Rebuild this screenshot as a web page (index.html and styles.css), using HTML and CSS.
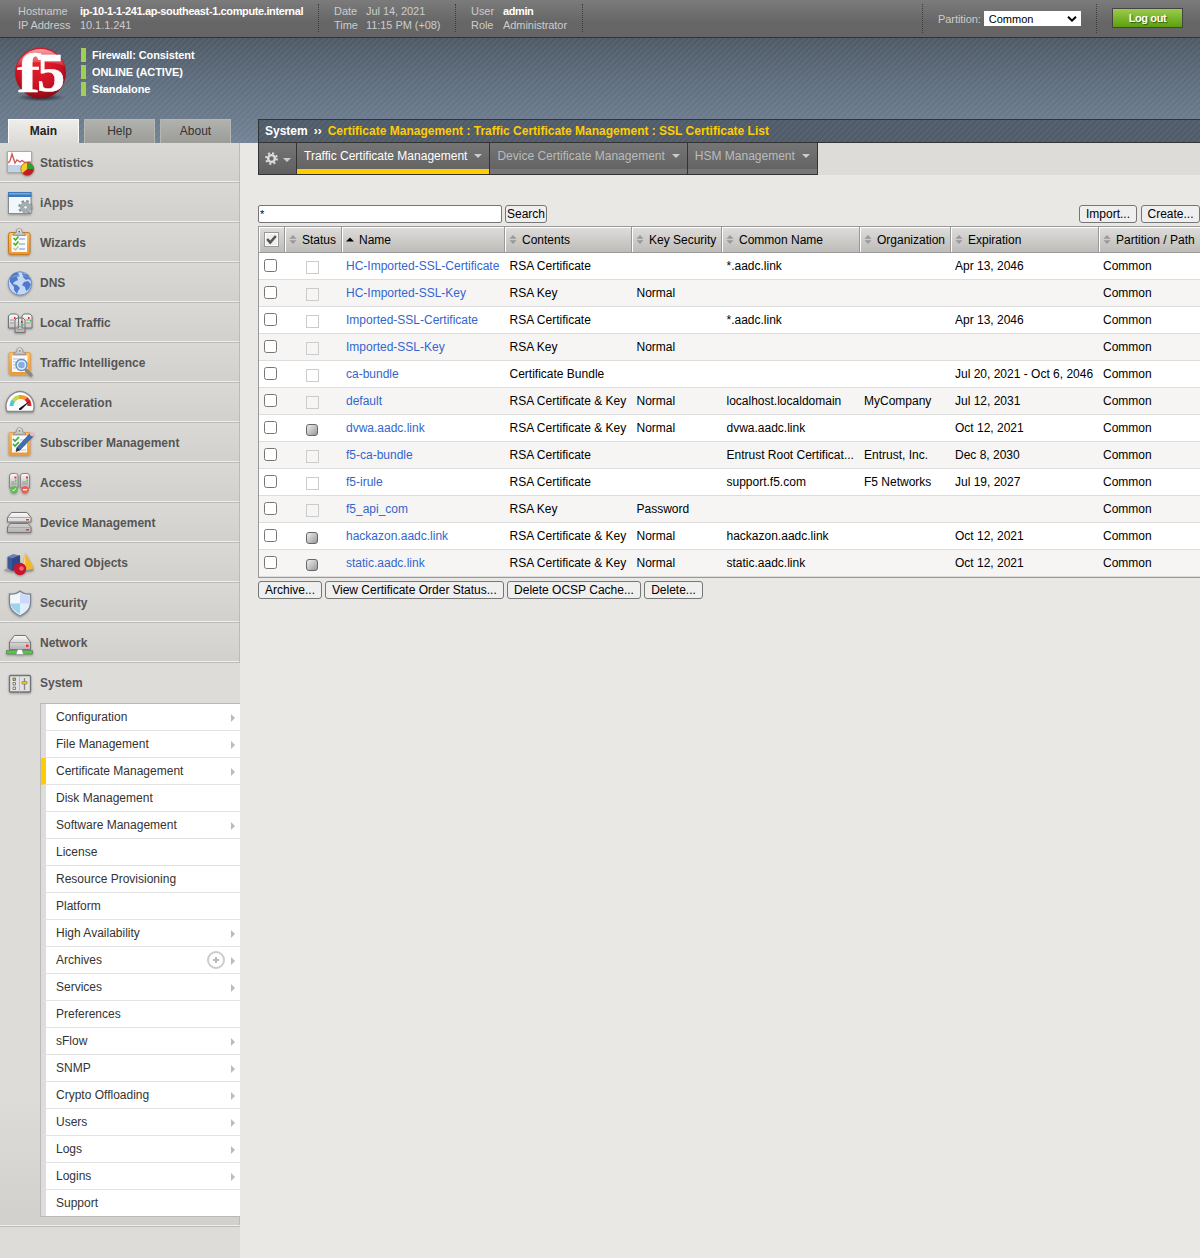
FILE: index.html
```html
<!DOCTYPE html>
<html lang="en">
<head>
<meta charset="utf-8">
<title>SSL Certificate List</title>
<link rel="stylesheet" href="styles.css">
</head>
<body>
<svg class="defs" width="0" height="0" aria-hidden="true">
  <defs>
    <linearGradient id="metal" x1="0" y1="0" x2="0" y2="1"><stop offset="0" stop-color="#fafafa"/><stop offset="1" stop-color="#b2b2b2"/></linearGradient>
    <linearGradient id="board" x1="0" y1="0" x2="0" y2="1"><stop offset="0" stop-color="#ffc063"/><stop offset="1" stop-color="#f2952a"/></linearGradient>
    <radialGradient id="ball" cx=".45" cy=".3" r=".7"><stop offset="0" stop-color="#e8222c"/><stop offset=".65" stop-color="#cc1222"/><stop offset="1" stop-color="#8c0a16"/></radialGradient>
    <linearGradient id="gloss" x1="0" y1="0" x2="0" y2="1"><stop offset="0" stop-color="#fff" stop-opacity=".6"/><stop offset="1" stop-color="#fff" stop-opacity=".1"/></linearGradient>
    <radialGradient id="shade"><stop offset="0" stop-color="#1b222b"/><stop offset="1" stop-color="#1b222b" stop-opacity="0"/></radialGradient>
    <symbol id="sort" viewBox="0 0 7 9"><path d="M3.5 0 7 3.8H0zM3.5 9 0 5.2h7z" fill="#999"/></symbol>
    <symbol id="clip" viewBox="0 0 40 40"><path d="M14 12.500v-1.500l3-1.500q0-4 3-4t3 4l3 1.500v1.500z" fill="url(#metal)" stroke="#8b8b8b" stroke-width=".8"/><circle cx="20" cy="8.500" r=".9" fill="#777"/></symbol>
  </defs>
</svg>

<header class="topbar">
  <dl class="info host"><dt>Hostname</dt><dd class="strong">ip-10-1-1-241.ap-southeast-1.compute.internal</dd><dt>IP Address</dt><dd>10.1.1.241</dd></dl>
  <dl class="info date"><dt>Date</dt><dd>Jul 14, 2021</dd><dt>Time</dt><dd>11:15 PM (+08)</dd></dl>
  <dl class="info user"><dt>User</dt><dd class="strong">admin</dd><dt>Role</dt><dd>Administrator</dd></dl>
  <div class="partition"><span>Partition:</span><div class="select">Common<svg width="10" height="6" viewBox="0 0 10 6"><path d="M1 .8 5 4.700 9 .8" fill="none" stroke="#000" stroke-width="1.900"/></svg></div></div>
  <button class="logout">Log out</button>
</header>

<div class="banner">
  <svg class="logo" width="60" height="60" viewBox="0 0 60 60">
    <ellipse cx="30" cy="50.500" rx="24" ry="4" fill="url(#shade)"/>
    <circle cx="29.500" cy="26" r="25.500" fill="url(#ball)"/>
    <path d="M5.500 19a25.500 25.500 0 0 1 48 0Q32 11 5.500 19z" fill="url(#gloss)"/>
    <g fill="#fff" stroke="#fff" stroke-width=".6" font-family="Liberation Serif, serif" font-weight="700">
      <text x="6" y="44.500" font-size="54" textLength="23" lengthAdjust="spacingAndGlyphs">f</text>
      <text x="26" y="44" font-size="54" textLength="28" lengthAdjust="spacingAndGlyphs">5</text>
    </g>
  </svg>
  <ul class="state"><li>Firewall: Consistent</li><li>ONLINE (ACTIVE)</li><li>Standalone</li></ul>
</div>

<div class="page">
  <aside class="sidebar">
    <nav class="side-tabs"><a class="on">Main</a><a>Help</a><a>About</a></nav>
    <ul class="menu">
      <li><svg viewBox="0 0 40 40"><path d="M7.500 8.500h24v20.500h-24z" fill="#fdfdfd" stroke="#aaa"/><path d="M8 22h23v6H8z" fill="#bfd4e8"/><path d="M8 20l2-2 2-7 3 9 2-3 3 2 2-1.500 3 2 6-.5" fill="none" stroke="#d0525a" stroke-width="1.300"/><circle cx="27.300" cy="26" r="6.500" fill="#c9182b"/><path d="M27.300 26V19.500a6.500 6.500 0 0 0-5 10.700z" fill="#f4cf2c"/><path d="M27.300 26V19.500a6.500 6.500 0 0 1 6.500 6.500z" fill="#2ba52b"/><circle cx="27.300" cy="26" r="6.500" fill="none" stroke="#a0522d" stroke-width=".6"/></svg>Statistics</li>
      <li><svg viewBox="0 0 40 40"><path d="M8.500 9.500h22.500v21H8.500z" fill="#f3f6fb" stroke="#858b92"/><path d="M8 9h23.500v5H8z" fill="#3f78b8"/><path d="M9 10h21.500v1.500H9z" fill="#76a9df"/><circle cx="25.500" cy="24.300" r="6" fill="none" stroke="#8a9495" stroke-width="2.600" stroke-dasharray="2.600 2.112"/><circle cx="25.500" cy="24.300" r="4" fill="#d4dada" stroke="#a3adad" stroke-width="3"/><circle cx="25.500" cy="24.300" r="2" fill="#e9eded" stroke="#7d8788" stroke-width=".8"/></svg>iApps</li>
      <li><svg viewBox="0 0 40 40"><rect x="8.500" y="9.500" width="21.500" height="22" rx="2" fill="url(#board)" stroke="#c07b27"/><path d="M11.500 12.500h15.500v16.500H11.500z" fill="#f8fafc"/><path d="M19 16h6m-6 5h6m-6 5h6" stroke="#a7b2d8" stroke-width="1.500"/><path d="m13.500 15 2 2 3-3.500m-5 6.500 2 2 3-3.500" fill="none" stroke="#43b71e" stroke-width="1.700"/><path d="m13.500 25 2 2 3-3.500" fill="none" stroke="#b9c5b8" stroke-width="1.500"/><use href="#clip" x="-.8"/></svg>Wizards</li>
      <li><svg viewBox="0 0 40 40"><circle cx="20" cy="20.500" r="11.700" fill="#c4d8f3" stroke="#6e8cc0"/><path d="M10 15q3-6 8-5l2 3-3 1 1 3-4 2-1 2 4 1 3 3-2 3-1 3-3-4v-3l-4-5zM22 10l6 2 3 6-3-2-2 1-3-3zM24 19l4-1 3 3-2 5-3 2-1-4-3-2z" fill="#5079cb"/><path d="M11 15a11 8 0 0 1 18 0q-8-4-18 0z" fill="#fff" opacity=".25"/></svg>DNS</li>
      <li><svg viewBox="0 0 40 40"><g stroke="#747474" fill="url(#metal)"><path d="M8.500 25V13l2-2h6l2 2v12zM22 25V13l2-2h6l2 2v12zM15 29.500V17l2-2h6l2 2v12.500z"/></g><path d="M10 17h4.500m-4.500 3h4.500m11-3h5m-5 3h5m-13.500 3.500h6m-6 3h6" stroke="#999"/><path d="M14 14h1.500v2H14zM28 14h1.500v2H28zM21 18h1.500v2H21z" fill="#ec202d"/><path d="M30 17h1.500v1.500H30zM22 21h1.500v1.500H22z" fill="#2fc743"/></svg>Local Traffic</li>
      <li><svg viewBox="0 0 40 40"><rect x="9" y="9.500" width="21.500" height="22" rx="1.500" fill="url(#board)" stroke="#e0a355"/><path d="M12 12.500h15.500v16.500H12z" fill="#f8fafc"/><path d="M13 16h12m-12 3h4m-4 3h3m-3 3h3" stroke="#b4bdd5"/><use href="#clip" x="-.3" y="-.8"/><path d="m26 27 5 5" stroke="#888" stroke-width="3.200" stroke-linecap="round"/><circle cx="21.500" cy="22" r="5.500" fill="#e3eefa" stroke="#6590c4" stroke-width="1.400"/><circle cx="21.500" cy="22" r="3.300" fill="#86aedc"/></svg>Traffic Intelligence</li>
      <li><svg viewBox="0 0 40 40"><path d="M7 28.500Q4 20 10 13q10-9 20 0 6 7 3 15.500z" fill="#fdfdfd" stroke="#888" stroke-width="1.300"/><g fill="none" stroke-width="4"><path d="M11.500 23q0-3 2-5.500" stroke="#54c5cf"/><path d="M13.500 17.500Q16 14.500 19 14" stroke="#c4d84b"/><path d="M19 14q4-.5 7 1.500" stroke="#f39b28"/><path d="M26 15.500q3.500 3 3.500 7.500" stroke="#e12a24"/></g><path d="M19 25.500 31 17l-9.500 9.500q-3 1.500-2.500-1z" fill="#111"/></svg>Acceleration</li>
      <li><svg viewBox="0 0 40 40"><rect x="9" y="9.500" width="21" height="22.500" rx="1" fill="url(#board)" stroke="#e0a355"/><path d="M12 12.500h15v17H12z" fill="#f8fafc"/><path d="M20 17h6m-6 5h6m-8 5h8" stroke="#b6bfdd"/><path d="m13 16 2 2 4-4m-6 7 2 2 4-4" fill="none" stroke="#39ad35" stroke-width="1.700"/><use href="#clip" x="-.5" y="-.8"/><path d="m16 28.500 1-4L29.500 11l3 2.700L20 27z" fill="#3f70b5" stroke="#2b4f88" stroke-width=".7"/><path d="m16 28.500 1-4 3 2.500z" fill="#333"/><circle cx="32" cy="11.200" r="2" fill="#f4b3c6"/></svg>Subscriber Management</li>
      <li><svg viewBox="0 0 40 40"><g stroke="#888" fill="url(#metal)"><path d="M9.500 25V13q0-2.500 2.500-2.500h3.500Q18 10.500 18 13v12zM20.500 25V13q0-2.500 2.500-2.500h4q2.500 0 2.500 2.500v12z"/></g><path d="M11 19h5.500M11 21h5.500M22 19h6m-6 2h6" stroke="#999"/><path d="M14.500 13.500h2v2h-2zM26 13.500h2v2h-2z" fill="#f02b35"/><path d="M15 16.500h1.500V18H15zM26.500 16.500H28V18h-1.500z" fill="#3fd04b"/><circle cx="14" cy="26.700" r="3.700" fill="#64b957"/><path d="m12.300 26.700 1.300 1.300 2-2.600" stroke="#fff" fill="none"/><circle cx="25" cy="26.700" r="3.700" fill="#e56158"/><path d="M23 26.700h4" stroke="#fff" stroke-width="1.300"/></svg>Access</li>
      <li><svg viewBox="0 0 40 40"><g fill="url(#metal)" stroke="#777"><path d="M7.500 19v-4.500l4-5h15.500l4 5V19zM7.500 29.500V24l3-3.500h17.500l3 3.500v5.500z"/></g><path d="M8 14.500h22.500M8 24.500h22.500" stroke="#aaa"/><path d="M26 16h3v1.500h-3zM26 26h3v1.500h-3z" fill="#ec3544"/></svg>Device Management</li>
      <li><svg viewBox="0 0 40 40"><ellipse cx="19" cy="27" rx="15" ry="3" fill="#777" opacity=".4"/><path d="m7.500 14 5.500-2.500 7 1v12L12 28l-4.500-3z" fill="#3c5797"/><path d="m7.500 14 5.500-2.500 7 1-7.500 3z" fill="#6681b8"/><path d="m12 15.500 8-3v12L12 28z" fill="#2f4885"/><path d="M25.500 10 34 25q-5 3-12 1.500z" fill="#f0b62e"/><path d="m25.500 10-3.500 16 3-.3z" fill="#ffda73"/><circle cx="20" cy="26" r="6.200" fill="#c9142d"/><circle cx="21.500" cy="25.500" r="2.300" fill="#e96a7a"/></svg>Shared Objects</li>
      <li><svg viewBox="0 0 40 40"><path d="M20 8q4 3.500 10.500 3v9q0 8-10.500 13Q9.500 28 9.500 20v-9Q16 11.500 20 8z" fill="#dff0fb" stroke="#7e8490" stroke-width="1.300"/><path d="M20 10v10.500h-9.500V12.500q6 0 9.500-2.500z" fill="#f4f7fa"/><path d="M20 10v10.500h9.500V12.500q-6 0-9.500-2.500z" fill="#cdd9f8"/><path d="M20 20.500V31q-9-4.500-9.500-10.500z" fill="#9dd2f0"/></svg>Security</li>
      <li><svg viewBox="0 0 40 40"><path d="M9.500 26.500V19l5-6.500h11l5 6.500v7.500z" fill="url(#metal)" stroke="#777"/><path d="M10 19.500h20" stroke="#aaa"/><path d="M26 21.500h2.500V24H26z" fill="#ec3544"/><path d="M6.500 27.500h26v3.500h-26z" fill="#4fcb3d" stroke="#6c8e66"/><path d="m16 31.500 1.500-5h4.500l1.500 5z" fill="#fff" stroke="#888" stroke-width=".6"/></svg>Network</li>
      <li class="open"><svg viewBox="0 0 40 40"><rect x="9.500" y="12.500" width="21" height="16.500" rx="1" fill="#e2e2e2" stroke="#737373" stroke-width="1.300"/><path d="M19.500 13v16" stroke="#bbb"/><g fill="#eee" stroke="#666" stroke-width=".8"><path d="M13 15h2.500v2.500H13z" fill="#d6c02c"/><path d="M13 19.500h2.500V22H13zM13 24h2.500v2.500H13z"/></g><path d="M24.500 15v12" stroke="#888" stroke-width="1.300"/><path d="M22 18.500h5v2.500h-5z" fill="#e9cf2e" stroke="#777" stroke-width=".6"/></svg>System</li>
    </ul>
    <div class="submenu-wrap">
      <ul class="submenu">
        <li class="more">Configuration</li><li class="more">File Management</li><li class="more current">Certificate Management</li><li>Disk Management</li><li class="more">Software Management</li><li>License</li><li>Resource Provisioning</li><li>Platform</li><li class="more">High Availability</li>
        <li class="more">Archives<svg class="add" width="18" height="18" viewBox="0 0 18 18"><circle cx="9" cy="9" r="8" fill="none" stroke="#ccc" stroke-width="2"/><path d="M9 6v6M6 9h6" stroke="#bbb" stroke-width="2"/></svg></li>
        <li class="more">Services</li><li>Preferences</li><li class="more">sFlow</li><li class="more">SNMP</li><li class="more">Crypto Offloading</li><li class="more">Users</li><li class="more">Logs</li><li class="more">Logins</li><li>Support</li>
      </ul>
    </div>
  </aside>

  <main class="content">
    <div class="crumbs"><b>System</b><b class="sep">››</b><span>Certificate Management : Traffic Certificate Management : SSL Certificate List</span></div>
    <nav class="tabs">
      <a class="gear"><svg width="13" height="13" viewBox="0 0 13 13"><circle cx="6.500" cy="6.500" r="5.400" fill="none" stroke="#ddd" stroke-width="2" stroke-dasharray="2 2.240"/><circle cx="6.500" cy="6.500" r="3.400" fill="none" stroke="#ddd" stroke-width="2.400"/></svg><i></i></a>
      <a class="on">Traffic Certificate Management<i></i></a>
      <a>Device Certificate Management<i></i></a>
      <a>HSM Management<i></i></a>
    </nav>
    <div class="toolbar">
      <input class="query" type="text" value="*"><button class="search">Search</button>
      <button class="import">Import...</button><button class="create">Create...</button>
    </div>
    <table class="list">
      <colgroup><col class="c1"><col class="c2"><col class="c3"><col class="c4"><col class="c5"><col class="c6"><col class="c7"><col class="c8"><col></colgroup>
      <thead><tr>
        <th><span class="all"><svg width="11" height="11" viewBox="0 0 11 11"><path d="m1.200 5 3 3.500L9.800 2" fill="none" stroke="#555" stroke-width="2.600"/></svg></span></th>
        <th><svg class="s"><use href="#sort"/></svg>Status</th>
        <th><svg class="s"><path d="M0 6.500h8L4 2.500z"/></svg>Name</th>
        <th><svg class="s"><use href="#sort"/></svg>Contents</th>
        <th><svg class="s"><use href="#sort"/></svg>Key Security</th>
        <th><svg class="s"><use href="#sort"/></svg>Common Name</th>
        <th><svg class="s"><use href="#sort"/></svg>Organization</th>
        <th><svg class="s"><use href="#sort"/></svg>Expiration</th>
        <th><svg class="s"><use href="#sort"/></svg>Partition / Path</th>
      </tr></thead>
      <tbody>
        <tr><td><input type="checkbox"></td><td><i class="none"></i></td><td><a>HC-Imported-SSL-Certificate</a></td><td>RSA Certificate</td><td></td><td>*.aadc.link</td><td></td><td>Apr 13, 2046</td><td>Common</td></tr>
        <tr><td><input type="checkbox"></td><td><i class="none"></i></td><td><a>HC-Imported-SSL-Key</a></td><td>RSA Key</td><td>Normal</td><td></td><td></td><td></td><td>Common</td></tr>
        <tr><td><input type="checkbox"></td><td><i class="none"></i></td><td><a>Imported-SSL-Certificate</a></td><td>RSA Certificate</td><td></td><td>*.aadc.link</td><td></td><td>Apr 13, 2046</td><td>Common</td></tr>
        <tr><td><input type="checkbox"></td><td><i class="none"></i></td><td><a>Imported-SSL-Key</a></td><td>RSA Key</td><td>Normal</td><td></td><td></td><td></td><td>Common</td></tr>
        <tr><td><input type="checkbox"></td><td><i class="none"></i></td><td><a>ca-bundle</a></td><td>Certificate Bundle</td><td></td><td></td><td></td><td>Jul 20, 2021 - Oct 6, 2046</td><td>Common</td></tr>
        <tr><td><input type="checkbox"></td><td><i class="none"></i></td><td><a>default</a></td><td>RSA Certificate &amp; Key</td><td>Normal</td><td>localhost.localdomain</td><td>MyCompany</td><td>Jul 12, 2031</td><td>Common</td></tr>
        <tr><td><input type="checkbox"></td><td><i class="used"></i></td><td><a>dvwa.aadc.link</a></td><td>RSA Certificate &amp; Key</td><td>Normal</td><td>dvwa.aadc.link</td><td></td><td>Oct 12, 2021</td><td>Common</td></tr>
        <tr><td><input type="checkbox"></td><td><i class="none"></i></td><td><a>f5-ca-bundle</a></td><td>RSA Certificate</td><td></td><td>Entrust Root Certificat...</td><td>Entrust, Inc.</td><td>Dec 8, 2030</td><td>Common</td></tr>
        <tr><td><input type="checkbox"></td><td><i class="none"></i></td><td><a>f5-irule</a></td><td>RSA Certificate</td><td></td><td>support.f5.com</td><td>F5 Networks</td><td>Jul 19, 2027</td><td>Common</td></tr>
        <tr><td><input type="checkbox"></td><td><i class="none"></i></td><td><a>f5_api_com</a></td><td>RSA Key</td><td>Password</td><td></td><td></td><td></td><td>Common</td></tr>
        <tr><td><input type="checkbox"></td><td><i class="used"></i></td><td><a>hackazon.aadc.link</a></td><td>RSA Certificate &amp; Key</td><td>Normal</td><td>hackazon.aadc.link</td><td></td><td>Oct 12, 2021</td><td>Common</td></tr>
        <tr><td><input type="checkbox"></td><td><i class="used"></i></td><td><a>static.aadc.link</a></td><td>RSA Certificate &amp; Key</td><td>Normal</td><td>static.aadc.link</td><td></td><td>Oct 12, 2021</td><td>Common</td></tr>
      </tbody>
    </table>
    <div class="actions"><button class="w1">Archive...</button><button class="w2">View Certificate Order Status...</button><button class="w3">Delete OCSP Cache...</button><button class="w4">Delete...</button></div>
  </main>
</div>
</body>
</html>
```

FILE: styles.css
```css
* { box-sizing: border-box; }
html, body { margin: 0; }
body {
  height: 1258px;
  overflow: hidden;
  display: flex;
  flex-direction: column;
  background: #e9e8e4;
  font: 12px/16px "Liberation Sans", Arial, sans-serif;
  color: #000;
}
ul, dl, dd { margin: 0; padding: 0; list-style: none; }
.defs { position: absolute; }
button {
  height: 18px;
  padding: 0;
  border: 1px solid #767676;
  border-radius: 3px;
  background: #efefef;
  font: 12px/14px "Liberation Sans", Arial, sans-serif;
  color: #000;
  white-space: nowrap;
}

/* top bar */
.topbar {
  flex: none;
  height: 38px;
  display: flex;
  padding-left: 18px;
  border-bottom: 1px solid #333;
  background: linear-gradient(#7b7b7b, #666 60%, #656565);
  color: #ccc;
  font-size: 11px;
  line-height: 14px;
}
.info {
  display: grid;
  align-content: start;
  height: 28px;
  margin-top: 4px;
  border-right: 1px dotted #3c3c3c;
  letter-spacing: -.06px;
  white-space: nowrap;
}
.host { grid-template-columns: 62px 1fr; width: 301px; margin-right: 15px; }
.date { grid-template-columns: 32px 1fr; width: 122px; margin-right: 15px; }
.user { grid-template-columns: 32px 1fr; width: 112px; }
.info .strong { color: #fff; font-weight: 700; letter-spacing: -.38px; }
.user .strong { letter-spacing: -.4px; }
.partition {
  display: flex;
  align-items: center;
  gap: 3px;
  width: 175px;
  height: 29px;
  margin: 4px 0 0 auto;
  padding-left: 15px;
  border: dotted #3c3c3c;
  border-width: 0 1px;
}
.partition span { letter-spacing: -.06px; }
.select {
  display: flex;
  align-items: center;
  justify-content: space-between;
  width: 97px;
  height: 15px;
  padding: 0 4px 0 5px;
  background: #fff;
  color: #000;
}
.topbar .logout {
  width: 71px;
  height: 20px;
  margin: 8px 17px 0 15px;
  border: 1px solid #444;
  border-radius: 0;
  background: linear-gradient(#9bcb4b, #5d9f10);
  color: #fff;
  font-size: 11px;
  font-weight: 700;
  letter-spacing: -.4px;
  text-shadow: 1px 1px 1px #345c08;
}

/* striped banner */
.banner {
  flex: none;
  height: 105px;
  display: flex;
  align-items: flex-start;
  padding: 9px 0 0 11px;
  background:
    repeating-linear-gradient(135deg, rgba(255,255,255,.05) 0 1.400px, transparent 1.400px 4.240px),
    linear-gradient(#4f5a66, #5f6e7e 40%, #738496);
}
.logo { overflow: visible; }
.state { margin: 1px 0 0 10px; font-size: 11px; font-weight: 700; letter-spacing: -.1px; color: #fff; }
.state li { height: 14px; margin-bottom: 3px; padding-left: 6px; border-left: 5px solid #9fcf55; line-height: 14px; }

.page { flex: 1; display: flex; margin-top: -24px; }

/* sidebar */
.sidebar { flex: none; width: 240px; display: flex; flex-direction: column; }
.side-tabs { display: flex; gap: 5px; height: 24px; padding-left: 8px; }
.side-tabs a {
  width: 71px;
  border: 1px solid #b6b6b2;
  border-bottom: 0;
  background: linear-gradient(#b1b1ad, #9c9c98);
  color: #333;
  line-height: 23px;
  text-align: center;
}
.side-tabs .on { border-color: #fafafa; background: linear-gradient(#eeedeb, #dbdad6); color: #222; font-weight: 700; }
.menu { background: #dddcd8; }
.menu li {
  display: flex;
  height: 40px;
  border-right: 1px solid #bbb;
  border-bottom: 1px solid #bbb;
  box-shadow: inset 0 -1px #f0efed;
  background: linear-gradient(#dad9d5, #d1d0cc);
  color: #555;
  font-weight: 700;
  line-height: 41px;
}
.menu svg { width: 40px; height: 40px; flex: none; filter: drop-shadow(0 1px 1px rgba(0,0,0,.3)); }
.menu .open { border-color: transparent; box-shadow: none; background: #dddcd8; }
.submenu-wrap {
  height: 524px;
  padding-left: 40px;
  border-bottom: 1px solid #bbb;
  box-shadow: inset 0 -1px #f0efed, inset -1px 0 #bbb;
  background: linear-gradient(#dddcd8 75%, #d1d0cc);
}
.submenu { border: 1px solid #b9b9b9; border-right: 0; background: #fff; }
.submenu li {
  display: flex;
  align-items: center;
  height: 27px;
  padding: 0 5px 0 10px;
  border-left: 5px solid #ddd;
  border-bottom: 1px solid #e3e3e3;
  color: #333;
}
.submenu li:last-child { height: 26px; border-bottom: 0; }
.submenu .current { border-left-color: #fc0; }
.more::after {
  content: "";
  margin: 1px 0 0 auto;
  border: solid transparent;
  border-width: 4px 0 4px 4px;
  border-left-color: #bbb;
}
.add { margin: 0 0 0 auto; }
.more:has(.add)::after { margin-left: 6px; }
.sidebar::after { content: ""; flex: 1; background: #dddcd8; }

/* content */
.content { flex: 1; min-width: 0; padding-left: 18px; }
.crumbs {
  display: flex;
  height: 24px;
  padding-left: 6px;
  border: 1px solid #333;
  border-right: 0;
  background: repeating-linear-gradient(135deg, rgba(255,255,255,.05) 0 1.400px, transparent 1.400px 4.240px), #505c69;
  font-weight: 700;
  line-height: 22px;
  color: #fff;
}
.crumbs .sep { margin: 0 6px; }
.crumbs span { color: #fc0; }
.tabs { display: flex; height: 32px; background: #dddcd8; }
.tabs a {
  display: flex;
  height: 32px;
  padding: 0 7px;
  border: solid #333;
  border-width: 0 1px 1px 0;
  background: linear-gradient(#757575, #646464 26px, #777 26px);
  color: #bbb;
  line-height: 26px;
}
.tabs .on { background: linear-gradient(#757575, #646464 26px, #fc0 26px); color: #fff; }
.tabs i { margin: 11px 0 0 7px; width: 0; height: 0; border: solid transparent; border-width: 4px 4px 0; border-top-color: #ccc; }
.tabs .gear { width: 39px; border-left-width: 1px; padding: 0 6px; background: linear-gradient(#757575, #606060); }
.gear svg { flex: none; margin-top: 9px; }
.tabs .gear i { margin: 15px 0 0 5px; }
.toolbar { display: flex; height: 51px; padding-top: 30px; }
.query { width: 244px; height: 18px; padding: 0 1px; border: 1px solid #767676; border-radius: 2px; font: 11px "Liberation Sans", sans-serif; }
.search { width: 42px; margin-left: 3px; }
.import { width: 58px; margin-left: auto; }
.create { width: 59px; margin-left: 4px; }

.list { width: 100%; table-layout: fixed; border-collapse: separate; border-spacing: 0; border-left: 1px solid #999; border-bottom: 1px solid #999; white-space: nowrap; }
.c1 { width: 26px; } .c2 { width: 57px; } .c3 { width: 163px; } .c4 { width: 127px; } .c5 { width: 90px; }
.c6 { width: 138px; } .c7 { width: 91px; } .c8 { width: 148px; }
th {
  height: 27px;
  padding: 2px 0 0 4px;
  border: solid #999;
  border-width: 1px 1px 1px 0;
  box-shadow: inset 1px 1px #fff;
  background: linear-gradient(#dedddb, #bdbcb8);
  font-weight: 400;
  text-align: left;
  line-height: 23px;
}
th:first-child { padding: 0 0 0 5px; }
th:last-child { border-right: 0; }
.s { width: 8px; height: 9px; margin-right: 5px; }
.s use { width: 8px; height: 9px; }
.all { display: flex; align-items: center; justify-content: center; width: 15px; height: 15px; border: 1px solid #999; background: #eee; box-shadow: inset 0 0 0 1px #fff; }
td { height: 27px; padding: 0 0 1px 4px; border-bottom: 1px solid #ddd; line-height: 16px; }
td:nth-child(4), td:nth-child(5), td:nth-child(6) { padding-left: 4.500px; }
tr:nth-child(even) td { background: #f6f5f4; }
tbody tr:nth-child(odd) td { background: #fff; }
td a { color: #36c; }
td input { display: block; width: 13px; height: 13px; margin: 0 0 0 1px; }
td i { display: block; margin: 3px 0 0 17px; }
.none { width: 13px; height: 13px; border: 1px solid #ccc; }
.used { width: 12px; height: 12px; margin-top: 4px; border: 1px solid #666; border-radius: 3px; background: linear-gradient(135deg, #eee, #999); }
.actions { display: flex; gap: 3px; padding-top: 3px; }
.w1 { width: 64px; } .w2 { width: 179px; } .w3 { width: 134px; } .w4 { width: 59px; }
```
